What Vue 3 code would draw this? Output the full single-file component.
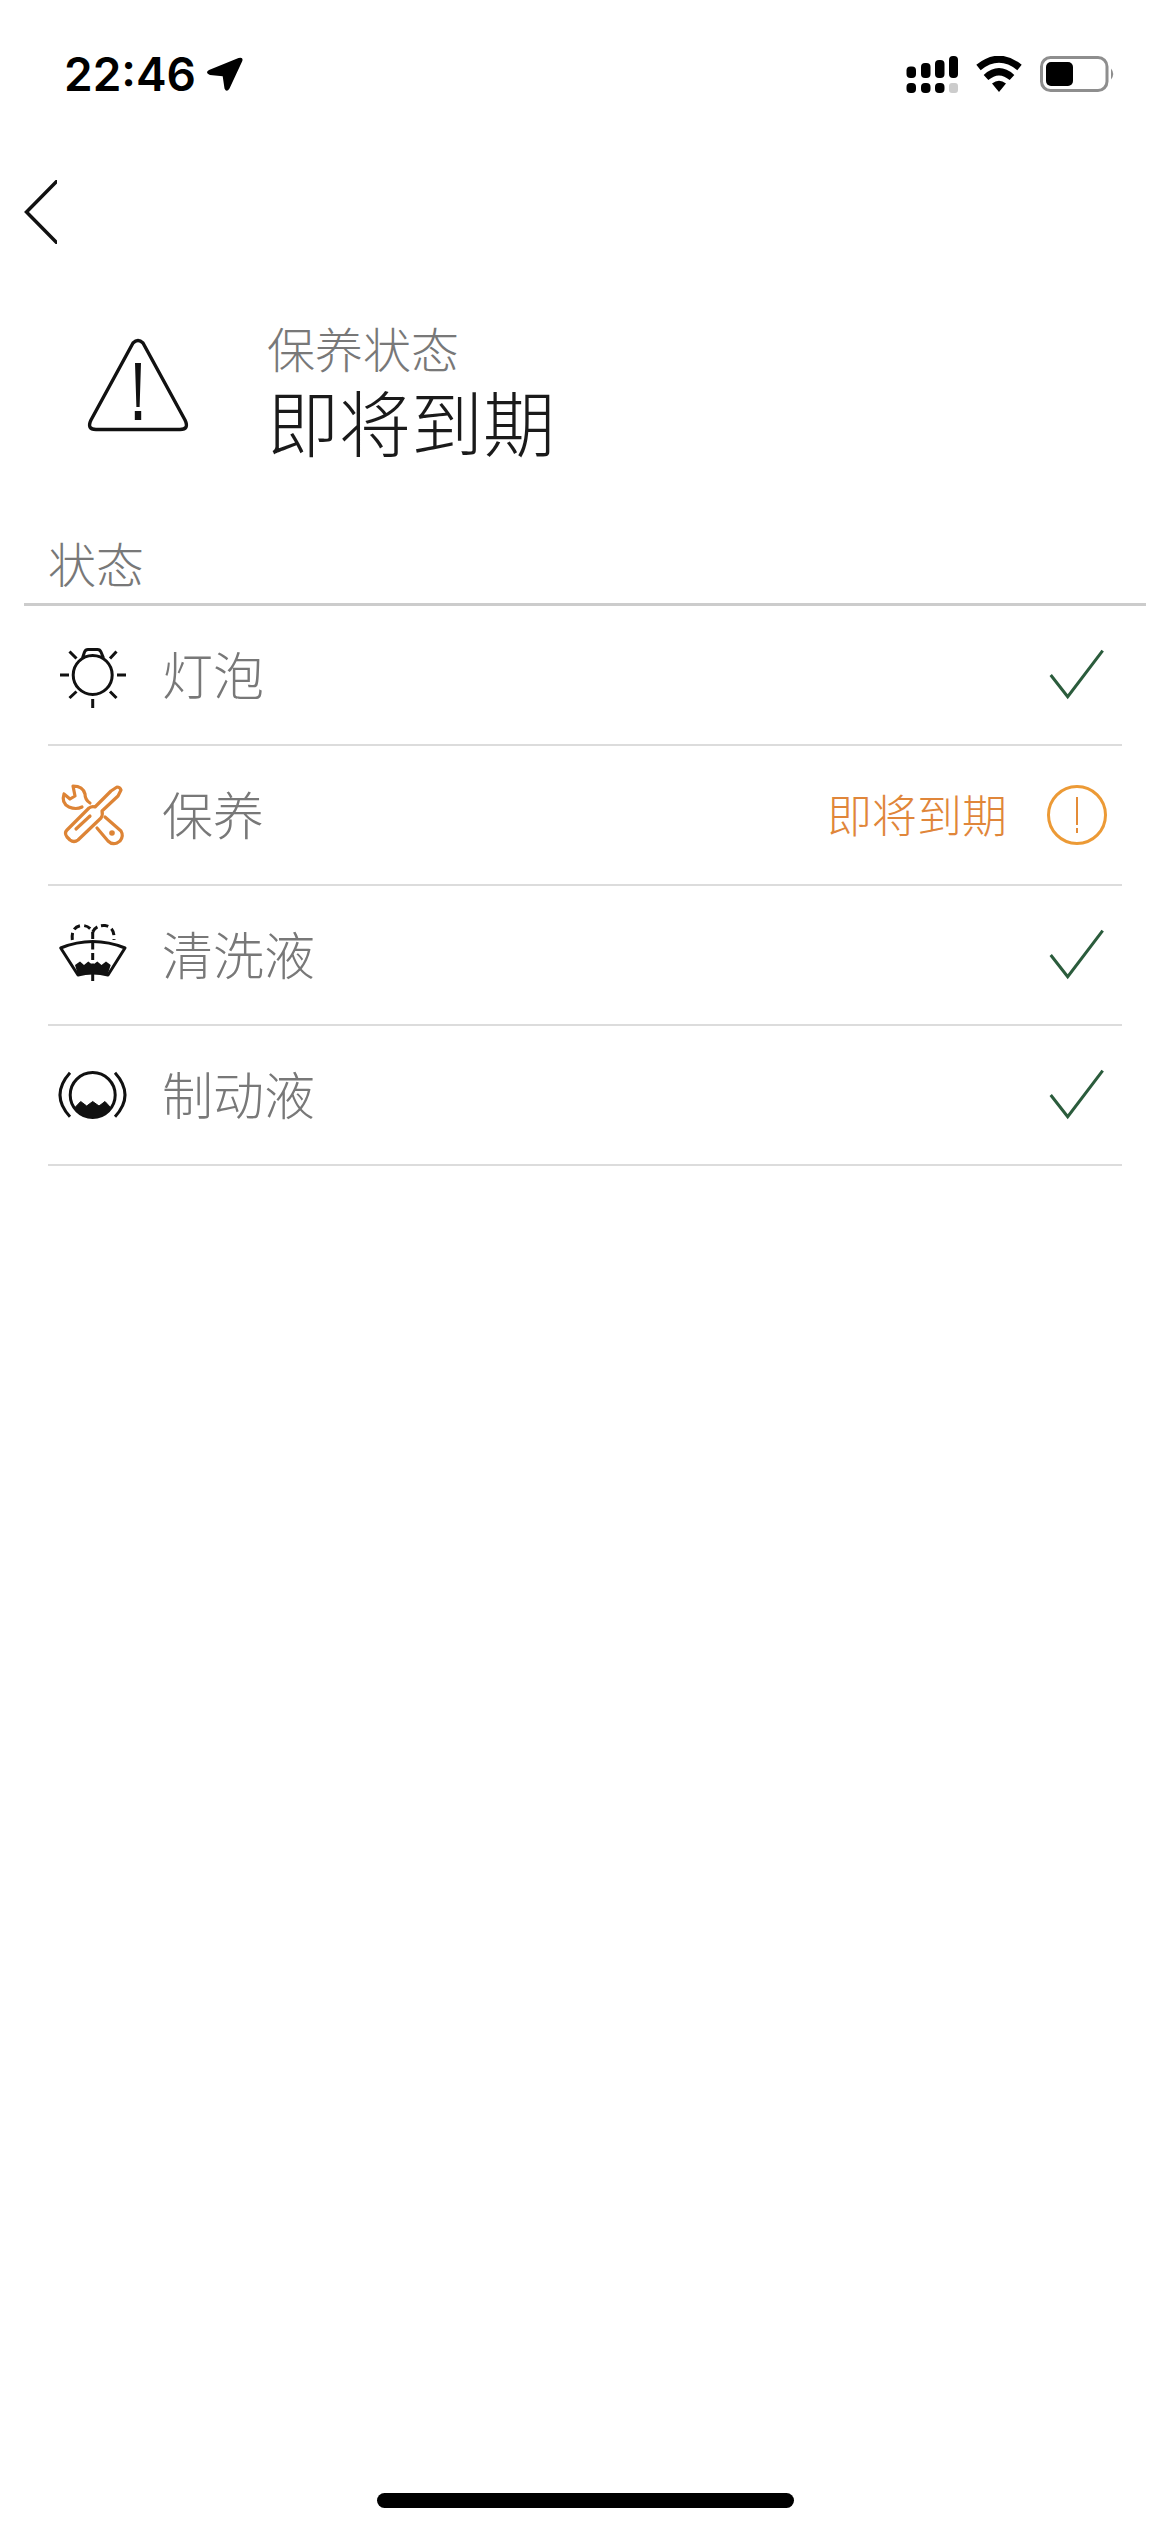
<script setup>
const rows = [
  { name: '灯泡', icon: 'bulb', status: 'ok' },
  { name: '保养', icon: 'wrench', status: 'warn', note: '即将到期' },
  { name: '清洗液', icon: 'washer', status: 'ok' },
  { name: '制动液', icon: 'brake', status: 'ok' }
]
</script>

<template>
  <div class="page">
    <header class="status">
      <span class="time">22:46</span>
      <svg class="arrow" width="38" height="38" viewBox="206 56 38 38">
        <path d="M209 71 L238.5 59 Q243.5 57.5 242.3 62 L229.5 89.5 Q226.5 94 224.5 89.5 L222.7 77.3 L210 76 Q204.5 73.5 209 71 Z" fill="#000" />
      </svg>
      <div class="spacer"></div>
      <svg width="52" height="37" viewBox="36 26 52 37">
        <rect x="36.5" y="36.5" width="9.5" height="11.5" rx="4" fill="#000" />
        <rect x="51" y="33" width="9.5" height="15" rx="4" fill="#000" />
        <rect x="65" y="30" width="9.5" height="18" rx="4" fill="#000" />
        <rect x="79" y="26" width="9" height="22" rx="4" fill="#000" />
        <rect x="36.5" y="53" width="9.5" height="10" rx="4" fill="#000" />
        <rect x="51" y="53" width="9.5" height="10" rx="4" fill="#000" />
        <rect x="65" y="53" width="9.5" height="10" rx="4" fill="#000" />
        <rect x="79" y="53" width="9" height="10" rx="3" fill="#ccc" />
      </svg>
      <svg class="wifi" width="48" height="36" viewBox="105 25 48 36">
        <path d="M108.5 36.5 Q129 20 149.5 36.5" fill="none" stroke="#000" stroke-width="7" />
        <path d="M116 46.5 Q129 35 142 46.5" fill="none" stroke="#000" stroke-width="7" />
        <path d="M122 52.5 Q129 47 136 52.5 L129 61 Z" fill="#000" />
      </svg>
      <svg class="battery" width="76" height="36" viewBox="170 26 76 36">
        <rect x="171.5" y="27.5" width="65.5" height="33" rx="9" fill="none" stroke="#8e8e8e" stroke-width="3" />
        <rect x="176" y="32" width="27" height="24" rx="5" fill="#000" />
        <path d="M241 38.5 Q245.5 44 241 49.5 Z" fill="#8e8e8e" />
      </svg>
    </header>

    <div class="nav">
      <svg width="33" height="64" viewBox="24 180 33 64">
        <path d="M60 178 L26.5 212 L60 246" fill="none" stroke="#111" stroke-width="3.5" />
      </svg>
    </div>

    <section class="summary">
      <svg class="warn-icon" width="120" height="120" viewBox="80 330 120 120">
        <path d="M133 343 Q138 338 143 343 L185 420 Q189.5 429.5 180 429.5 L96 429.5 Q86.5 429.5 91 420 Z" fill="none" stroke="#111" stroke-width="3.4" stroke-linejoin="round" />
        <path d="M135 363 H141 L139.6 407 H136.4 Z" fill="#111" />
        <rect x="134.8" y="411" width="6.4" height="9" fill="#111" />
      </svg>
      <div class="summary-text">
        <div class="subtitle">保养状态</div>
        <div class="title">即将到期</div>
      </div>
    </section>

    <h2 class="section-label">状态</h2>

    <ul class="list">
      <li v-for="row in rows" :key="row.name" class="row">
        <svg class="row-icon" width="100" height="100" viewBox="0 -5 100 100">
          <g v-if="row.icon === 'bulb'" fill="none" stroke="#111" stroke-width="3">
            <circle cx="52.7" cy="45" r="19.5" />
            <path d="M42.5 28 L44.5 22 Q45.5 19.5 48 19.5 L57.5 19.5 Q60 19.5 61 22 L63.5 28" />
            <path d="M20 45 H29 M77 45 H86 M52.7 69 V78 M29.5 21.5 L36.5 28.5 M76.5 21.5 L70 28.5 M29.5 68 L36.5 61.5 M76.5 68 L70 61.5" />
          </g>
          <g v-else-if="row.icon === 'wrench'" fill="none" stroke="#dd8436" stroke-width="3.2" stroke-linejoin="round" stroke-linecap="round">
            <path d="M27 60 L49 38 Q52 36 55 37 L71 21 L77 17 Q80 17 81 20 L78 26 L62 41 Q63 45 61 48 L38 70 Q34 73 30 70 L27 67 Q24 63 27 60 Z" />
            <path d="M36 59 L50 46" />
            <path d="M24 24 Q21 33 29 37 Q36 40 42 37 M24 24 L30 29 L35 26 L33 16 Q43 16 45 24 Q45 30 50 33" />
            <path d="M65 47 L81 61 Q84 66 80 71 L77 73 Q72 75 68 71 L57 58" />
            <circle cx="72" cy="63" r="2.8" fill="#dd8436" stroke="none" />
          </g>
          <g v-else-if="row.icon === 'washer'" fill="none" stroke="#111" stroke-width="3">
            <path d="M32.3 30 Q31 17 41 15.5 Q49 15 52.7 22 Q56 15 65 15.5 Q75 17 74 30" stroke-dasharray="7 4" />
            <path d="M52.7 22 V72" stroke-dasharray="7 3.5" />
            <path d="M20.7 38 Q52.7 25 85 38 L68 65 Q52.7 61 38 65 Z" stroke-linejoin="round" />
            <path d="M35 55 L40 51.5 L44 55 L48.3 51.5 L52.7 55 L57.3 51.5 L61.5 55 L66 51.5 L70.7 55 L67.5 65 Q52.7 61 38 65 Z" fill="#111" stroke="none" />
          </g>
          <g v-else fill="none" stroke="#111" stroke-width="3">
            <circle cx="52.7" cy="45" r="22.5" />
            <path d="M30 22.7 Q10 45 30 66.7 M75 22.7 Q95 45 75 66.7" />
            <path d="M34.5 58 L40.7 51.5 L46.7 56 L52.7 51.5 L59 56 L65 51.5 L71 58 A22 22 0 0 1 34.5 58 Z" fill="#111" stroke="#111" stroke-width="1" stroke-linejoin="round" />
          </g>
        </svg>
        <span class="row-name">{{ row.name }}</span>
        <span v-if="row.note" class="row-note">{{ row.note }}</span>
        <svg v-if="row.status === 'ok'" class="row-status" width="60" height="60" viewBox="0 0 60 60">
          <path d="M3.7 30 L20.7 51.7 L55.7 5.7" fill="none" stroke="#2b5c3c" stroke-width="3" />
        </svg>
        <svg v-else class="row-status" width="60" height="60" viewBox="0 0 60 60">
          <circle cx="30" cy="30" r="28.5" fill="none" stroke="#ec9a36" stroke-width="3" />
          <rect x="29" y="12" width="2" height="28" fill="#e48c38" />
          <rect x="29" y="43" width="2" height="5" fill="#e48c38" />
        </svg>
      </li>
    </ul>

    <div class="home-wrap"><div class="home"></div></div>
  </div>
</template>

<style>
html, body { margin: 0; background: #fff; }
</style>

<style scoped>
.page {
  width: 1170px;
  height: 2532px;
  display: flex;
  flex-direction: column;
  background: #fff;
  font-family: "Noto Sans CJK SC", "Noto Sans", sans-serif;
  font-weight: 300;
}
.status {
  height: 148px;
  display: flex;
  align-items: center;
  padding: 0 54px 0 64px;
  box-sizing: border-box;
}
.time {
  font-family: Inter, sans-serif;
  font-weight: 600;
  font-size: 46px;
  color: #000;
}
.arrow { margin-left: 10px; }
.spacer { flex: 1; }
.wifi { margin-left: 17px; }
.battery { margin-left: 17px; }
.nav {
  height: 128px;
  display: flex;
  align-items: center;
  padding-left: 24px;
}
.summary {
  display: flex;
  align-items: center;
  padding-left: 80px;
  height: 146px;
  margin-top: 40px;
}
.warn-icon {
  flex: none;
  margin-top: 2px;
}
.summary-text {
  margin-left: 67px;
  display: flex;
  flex-direction: column;
}
.subtitle {
  font-size: 48px;
  line-height: 62px;
  color: #787878;
}
.title {
  font-size: 72px;
  line-height: 84px;
  color: #1a1a1a;
}
.section-label {
  margin: 65px 24px 0;
  padding: 0 0 6px 24px;
  font-size: 48px;
  line-height: 70px;
  font-weight: 300;
  color: #787878;
  border-bottom: 3px solid #ccc;
}
.list {
  list-style: none;
  margin: 0 48px;
  padding: 0;
}
.row {
  height: 140px;
  box-sizing: border-box;
  display: flex;
  align-items: center;
  border-bottom: 2px solid #dcdcdc;
}
.row-icon {
  margin-left: -8px;
  flex: none;
}
.row-name {
  margin-left: 22px;
  padding-bottom: 5px;
  font-size: 51px;
  color: #787878;
}
.row-note {
  margin-left: auto;
  padding-bottom: 3px;
  font-size: 45px;
  color: #e0863a;
}
.row-status {
  flex: none;
  margin-left: auto;
  margin-right: 15px;
}
.row-note + .row-status {
  margin-left: 40px;
}
.home-wrap {
  margin-top: auto;
  height: 39px;
  display: flex;
  justify-content: center;
}
.home {
  width: 417px;
  height: 15px;
  border-radius: 7.5px;
  background: #000;
}
</style>
